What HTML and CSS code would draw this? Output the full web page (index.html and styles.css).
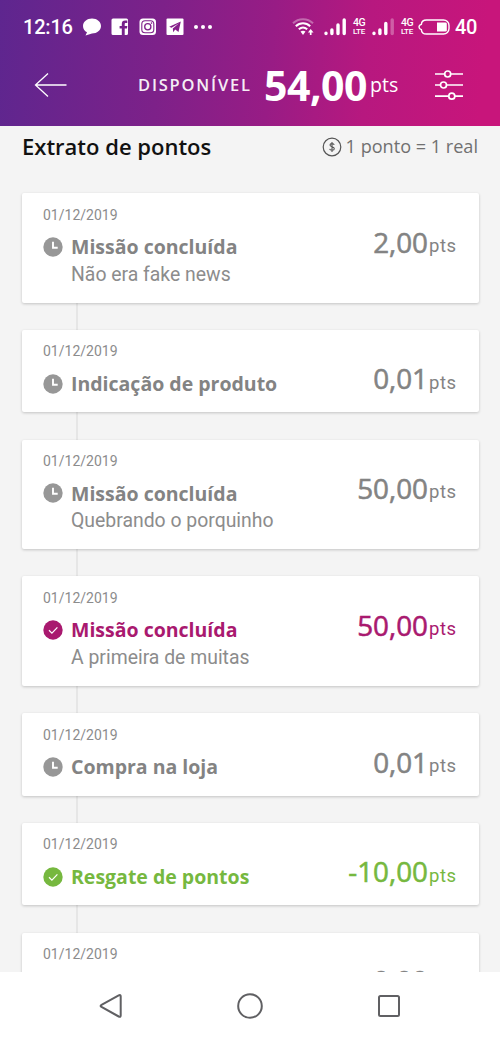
FILE: index.html
```html
<!DOCTYPE html>
<html lang="pt-BR">
<head>
<meta charset="utf-8">
<title>Extrato de pontos</title>
<link rel="stylesheet" href="styles.css">
</head>
<body>
<svg class="symbols" aria-hidden="true">
  <symbol id="clock" viewBox="0 0 20 20"><circle cx="10" cy="10" r="9.7" fill="#979797"/><path d="M10 4.8v5.9h4.7" fill="none" stroke="#fff" stroke-width="1.9"/></symbol>
  <symbol id="check" viewBox="0 0 20 20"><circle cx="10" cy="10" r="9.7" fill="currentColor"/><path d="M6 10.3l2.9 2.8 5.5-5.8" fill="none" stroke="#fff" stroke-width="1.2"/></symbol>
</svg>
<div class="screen">
  <header class="header">
    <div class="status">
      <span class="time">12:16</span>
      <svg class="chat" width="20" height="18" viewBox="0 0 20 18"><path d="M10 .5c5 0 9 3.3 9 7.5s-4 7.5-9 7.5L3.500 17.500 5 14.300C2.500 13 1 10.700 1 8 1 3.800 5 .5 10 .5Z" fill="#fff"/></svg>
      <svg class="facebook" width="18" height="18" viewBox="0 0 18 18"><path fill="#fff" d="M2 .5h13.500a1.500 1.500 0 0 1 1.500 1.500v13.500a1.500 1.500 0 0 1-1.500 1.500H13.700v-6.400H16l.3-2.700h-2.600V6.300c0-.9.300-1.300 1.300-1.300h1.300V2.600h-2.200c-2.200 0-3.300 1.200-3.300 3.300v2H8.600v2.700h2.200V17H2A1.500 1.500 0 0 1 .5 15.500V2A1.500 1.500 0 0 1 2 .5Z"/></svg>
      <svg class="instagram" width="18" height="18" viewBox="0 0 18 18"><rect x=".5" y=".5" width="16.500" height="16.500" rx="3.500" fill="#fff"/><g fill="none" stroke="#80218a"><rect x="2.800" y="2.800" width="12" height="12" rx="3.300" stroke-width="1.100"/><circle cx="8.800" cy="8.800" r="3.100" stroke-width="1.300"/></g><circle cx="12.500" cy="5.100" r=".8" fill="#80218a"/></svg>
      <svg class="telegram" width="18" height="18" viewBox="0 0 18 18"><rect x=".5" y=".5" width="17" height="16.500" rx="1" fill="#fff"/><path d="M14.800 3.400 12.500 14 9.200 11.600 7.200 14.200 6.800 10.400 13 5.200 5.500 9.700 3.200 8.700Z" fill="#86208a"/></svg>
      <svg class="more" width="20" height="6" viewBox="0 0 20 6" fill="#fff"><circle cx="3" cy="3" r="2"/><circle cx="10" cy="3" r="2"/><circle cx="17" cy="3" r="2"/></svg>
      <svg class="wifi" width="23" height="18" viewBox="0 0 23 18" fill="none" stroke="#fff" stroke-width="2"><path d="M1 5.300C6.500-.2 15.500-.2 21 5.300" opacity=".35"/><path d="M3.800 8.200c4.200-4 10.200-4 14.400 0M6.800 11.300c2.600-2.300 5.800-2.300 8.400 0"/><path d="M8.500 13.500q2.500-1.500 5 0L11 17Z" fill="#fff" stroke="none"/><path d="M18.700 17v-3" stroke-width="1.700"/><path d="M15.900 14.400 18.700 11l2.800 3.400Z" fill="#fff" stroke="none"/></svg>
      <svg class="signal" width="23" height="18" viewBox="0 0 23 18" stroke="#fff" stroke-width="3.400" stroke-linecap="round"><path d="M2 15.200v.3M7.900 12v3.500M14 7v8.500M20.200 2v13.500"/></svg>
      <span class="network"><b>4G</b><i>LTE</i></span>
      <svg class="signal second" width="23" height="18" viewBox="0 0 23 18" stroke="#fff" stroke-width="3.400" stroke-linecap="round"><path d="M2 15.200v.3M7.900 12v3.500M13.800 5.500v10"/><path d="M20.200 2v13.500" opacity=".3"/></svg>
      <span class="network last"><b>4G</b><i>LTE</i></span>
      <svg class="battery" width="32" height="16" viewBox="0 0 32 16"><path d="M8.500 1H25.500a5.500 5.500 0 0 1 5.500 5.500v3a5.500 5.500 0 0 1-5.500 5.500H8.500C5 15 3.500 13 3.400 10.700Q1 10 1 8t2.400-2.700C3.500 3 5 1 8.500 1Z" fill="none" stroke="#fff" stroke-width="1.400"/><path d="M19 3.500h8.500q1.300 0 1.300 1.300v6.400q0 1.300-1.300 1.300H19Z" fill="#fff"/></svg>
      <span class="level">40</span>
    </div>
    <div class="balance">
      <svg class="back" width="34" height="26" viewBox="0 0 34 26" fill="none" stroke="#fff" stroke-width="1.300"><path d="M32.500 13H1.500M14 1.500 1.500 13 14 24.500"/></svg>
      <span class="label">DISPONÍVEL</span>
      <strong class="total">54,00</strong>
      <span class="unit">pts</span>
      <svg class="filter" width="30" height="32" viewBox="0 0 30 32" fill="none" stroke="#fff" stroke-width="1.700"><path d="M1 5h9.500M17 5h12M1 16h5.500M12.500 16H29M1 27.200h13.500M21 27.200h8"/><circle cx="13.700" cy="5" r="3"/><circle cx="9.500" cy="16" r="3"/><circle cx="17.800" cy="27.200" r="3"/></svg>
    </div>
  </header>
  <main class="content">
    <div class="heading">
      <h1>Extrato de pontos</h1>
      <svg class="coin" width="20" height="20" viewBox="0 0 20 20" fill="none" stroke="#555"><circle cx="10" cy="10" r="8.800" stroke-width="1.200"/><path d="M12.200 7.800C11.700 6.200 8 6.200 8 8.100c0 2.100 4.300 1.400 4.300 3.700 0 2-4.200 2-4.700.1M10 5v10" stroke-width="1.100"/></svg>
      <span class="rate">1 ponto = 1 real</span>
    </div>
    <div class="timeline">
      <article class="card tall">
        <time>01/12/2019</time>
        <div class="row"><svg class="icon"><use href="#clock"/></svg><h2>Missão concluída</h2><span class="points">2,00</span><span class="pts">pts</span></div>
        <p>Não era fake news</p>
      </article>
      <article class="card">
        <time>01/12/2019</time>
        <div class="row"><svg class="icon"><use href="#clock"/></svg><h2>Indicação de produto</h2><span class="points">0,01</span><span class="pts">pts</span></div>
      </article>
      <article class="card tall">
        <time>01/12/2019</time>
        <div class="row"><svg class="icon"><use href="#clock"/></svg><h2>Missão concluída</h2><span class="points">50,00</span><span class="pts">pts</span></div>
        <p>Quebrando o porquinho</p>
      </article>
      <article class="card tall earned">
        <time>01/12/2019</time>
        <div class="row"><svg class="icon"><use href="#check"/></svg><h2>Missão concluída</h2><span class="points">50,00</span><span class="pts">pts</span></div>
        <p>A primeira de muitas</p>
      </article>
      <article class="card">
        <time>01/12/2019</time>
        <div class="row"><svg class="icon"><use href="#clock"/></svg><h2>Compra na loja</h2><span class="points">0,01</span><span class="pts">pts</span></div>
      </article>
      <article class="card redeemed">
        <time>01/12/2019</time>
        <div class="row"><svg class="icon"><use href="#check"/></svg><h2>Resgate de pontos</h2><span class="points">-10,00</span><span class="pts">pts</span></div>
      </article>
      <article class="card partial">
        <time>01/12/2019</time>
        <div class="row"><span class="points">0,00</span><span class="pts">pts</span></div>
      </article>
    </div>
  </main>
  <nav class="navigation">
    <svg width="24" height="26" viewBox="0 0 24 26"><path d="M2.500 11.800 19.700 2.300q2-1 2 1v19.200q0 2-2 1L2.500 14q-1.800-1.100 0-2.200Z"/></svg>
    <svg width="28" height="28" viewBox="0 0 28 28"><circle cx="14" cy="14" r="11.800"/></svg>
    <svg width="24" height="24" viewBox="0 0 24 24"><rect x="2" y="2" width="20" height="20" rx="1.500"/></svg>
  </nav>
</div>
</body>
</html>
```
FILE: styles.css
```css
* { box-sizing: border-box; }
body { margin: 0; font-family: "Open Sans", sans-serif; background: #fff; }
svg { display: block; flex: none; }
.symbols { position: absolute; width: 0; height: 0; }
.screen { width: 500px; height: 1039px; display: flex; flex-direction: column; overflow: hidden; }
.header { height: 126px; flex: none; color: #fff; background: linear-gradient(95deg, #5e268f 0%, #7d2189 32%, #981c85 54%, #b7187f 73%, #c8157b 96%); }
.status { display: flex; align-items: center; height: 53px; padding-left: 23px; font-family: Roboto, sans-serif; }
.time { width: 59px; font-size: 20px; font-weight: 500; letter-spacing: -.2px; }
.facebook { margin-left: 9px; }
.instagram { margin-left: 10px; }
.telegram { margin-left: 9px; }
.more { margin-left: 9px; }
.wifi { margin-left: 79px; }
.signal { margin-left: 9px; }
.second { margin-left: 6px; }
.network { width: 14px; margin-left: 5px; display: flex; flex-direction: column; align-items: center; }
.network b { font: 500 10.500px/9px Roboto, sans-serif; letter-spacing: -.5px; }
.network i { font: 500 8px/9px Roboto, sans-serif; letter-spacing: -.3px; }
.last { margin-left: 5px; }
.battery { margin-left: 4px; }
.level { margin-left: 5px; font-size: 20px; font-weight: 500; letter-spacing: -.3px; white-space: nowrap; }
.balance { display: flex; align-items: center; height: 63px; padding-left: 34px; white-space: nowrap; }
.label { width: 126px; margin-left: 70px; font-size: 16.500px; font-weight: 600; letter-spacing: 1.800px; opacity: .92; }
.total { width: 105px; font-size: 41px; line-height: 58px; letter-spacing: -.5px; }
.unit { margin-left: 1px; width: 30px; font-size: 19.500px; line-height: 26px; }
.filter { margin-left: 34px; }
.content { height: 846px; flex: none; overflow: hidden; background: #f4f4f4; }
.heading { height: 67.300px; padding: 6px 22px 0; display: flex; align-items: flex-start; white-space: nowrap; }
h1 { margin: 0 auto 0 0; font-size: 22px; font-weight: 600; line-height: 28px; color: #111; }
.coin { margin: 5px 4px 0 0; }
.rate { font-size: 18.100px; line-height: 28px; color: #707070; }
.timeline { width: 457px; margin-left: 22px; display: flex; flex-direction: column; gap: 27.300px; background: linear-gradient(90deg, transparent 54px, #e6e6e6 54px 56px, transparent 56px); }
.card { height: 82.500px; flex: none; padding: 12.400px 22px 0 21px; background: #fff; color: #838383; border-radius: 2px; box-shadow: 0 1px 3px #0003; }
.tall { height: 109.400px; }
time { display: block; height: 18px; font: 14px/18px Roboto, sans-serif; letter-spacing: 0; color: #8c8c8c; }
.row { display: flex; align-items: flex-start; height: 38px; white-space: nowrap; }
.icon { width: 20px; height: 20px; margin: 13.300px 8px 0 0; }
h2 { margin: 9.500px 0 0; font-size: 19.500px; line-height: 28px; font-weight: 700; }
.points { margin: 0 1px 0 auto; font-size: 27.800px; font-weight: 400; line-height: 37px; -webkit-text-stroke: .55px currentColor; }
.partial .points { line-height: 34px; }
.pts { width: 28px; margin-top: 10.300px; font: 18.500px/24px Roboto, sans-serif; letter-spacing: .5px; }
p { margin: .3px 0 0 28px; font: 19.400px/26px Roboto, sans-serif; color: #8c8c8c; white-space: nowrap; }
.earned .row { color: #a9196f; }
.redeemed .row { color: #76b83f; }
.navigation { height: 67px; flex: none; display: flex; align-items: center; justify-content: space-between; padding: 0 99px; background: #fff; }
.navigation svg { fill: none; stroke: #606063; stroke-width: 2; }
```
